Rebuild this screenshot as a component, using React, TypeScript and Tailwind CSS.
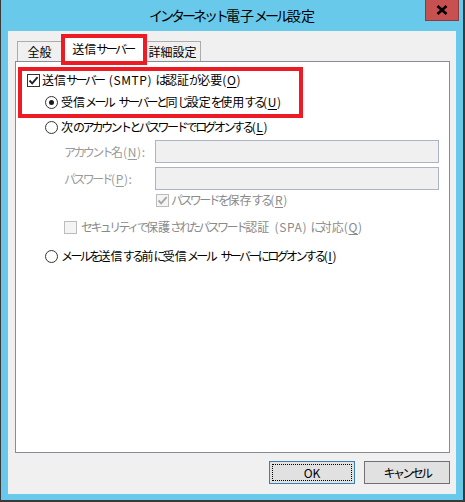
import React from 'react';

const font = { fontFamily: '"Noto Sans CJK JP", "Noto Sans", sans-serif' };

// Meiryo UI draws kana narrower and latin wider than Noto, so tighten/loosen by run
function T({ text, k, title }: { text: string; k?: string; title?: boolean }) {
  const parts = text.split(/([\u3040-\u30ff]+|[\x20-\x7e]+)/).filter(Boolean);
  return (
    <span>
      {parts.map((p, i) =>
        /^[\u3040-\u30ff]+$/.test(p) ? (
          <span key={i} className={title ? 'tracking-[-3px]' : 'tracking-[-2.6px]'}>{p}</span>
        ) : /^[\x20-\x7e]+$/.test(p) ? (
          <span key={i} className={p.startsWith(' ') ? 'tracking-[0.6px] ml-[2px]' : 'tracking-[0.6px]'}>{p}</span>
        ) : (
          <span key={i}>{p}</span>
        )
      )}
      {k && (
        <span className="tracking-[0.6px]">
          (<span className="underline underline-offset-2">{k}</span>)
        </span>
      )}
    </span>
  );
}

function CheckBox({ checked, disabled }: { checked?: boolean; disabled?: boolean }) {
  return (
    <span
      className={
        'w-[13px] h-[13px] shrink-0 border flex items-center justify-center ' +
        (disabled ? 'border-[#bcbcbc] bg-[#f4f4f4]' : 'border-[#333333] bg-white')
      }
    >
      {checked && (
        <svg width="11" height="11" viewBox="0 0 11 11">
          <path
            d="M1.5 5.5 L4.2 8.3 L9.6 2.2"
            fill="none"
            stroke={disabled ? '#a6a6a6' : '#222222'}
            strokeWidth="1.9"
          />
        </svg>
      )}
    </span>
  );
}

function Radio({ checked }: { checked?: boolean }) {
  return (
    <span className="w-[13px] h-[13px] shrink-0 rounded-full border border-[#333333] bg-white flex items-center justify-center">
      {checked && <span className="w-[5px] h-[5px] rounded-full bg-[#1a1a1a]" />}
    </span>
  );
}

export default function App() {
  return (
    <div className="w-[465px] h-[502px] bg-[#3a3a3a] pl-px pr-[2px] pb-[2px] text-[12px] text-black whitespace-nowrap" style={font}>
      <div className="relative h-full bg-[#69c9ea] flex flex-col px-[7px] pb-[6px]">
        {/* title bar */}
        <div className="h-[31px] flex items-center justify-center text-[14px] pb-[1px]">
          <T text="インターネット電子メール設定" title />
        </div>
        <div className="absolute top-0 right-[4px] w-[34px] h-[21px] bg-[#c75050] border-x border-b border-[#8c3a3a] flex items-center justify-center">
          <svg width="12" height="10" viewBox="0 0 12 10">
            <path d="M1.5 1 L10.5 9 M10.5 1 L1.5 9" stroke="#000" strokeWidth="2.6" />
          </svg>
        </div>

        {/* client area */}
        <div className="flex-1 bg-[#f0f0f0] flex flex-col">
          <div className="ml-[7px] mr-[6px] mt-[5px]">
            {/* tabs */}
            <div className="flex items-end h-[25px] pl-[2px]">
              <div className="w-[44px] h-[20px] border-t border-l border-[#acacac] bg-[#f0f0f0] flex items-center justify-center pt-[1px]">
                全般
              </div>
              <div className="relative z-10 w-[84px] h-[26px] -mb-px border-x border-t border-[#acacac] bg-white flex items-center justify-center pb-[1px]">
                <T text="送信サーバー" />
                <div className="absolute -top-[3px] -left-[1px] -right-[3px] -bottom-[3px] border-4 border-[#ed1c24]" />
              </div>
              <div className="w-[56px] h-[20px] border-t border-r border-[#acacac] bg-[#f0f0f0] flex items-center justify-center pt-[1px]">
                詳細設定
              </div>
            </div>

            {/* panel */}
            <div className="h-[392px] border border-[#898c95] bg-white flex flex-col">
              <div className="mt-[5px] ml-[2px] w-[285px] border-4 border-[#ed1c24] pb-[3px]">
                <div className="h-[18px] pl-[5px] flex items-center gap-[2px]">
                  <CheckBox checked />
                  <T text="送信サーバー (SMTP) は認証が必要" k="O" />
                </div>
                <div className="h-[18px] mt-[4px] pl-[23px] flex items-center gap-[3px]">
                  <Radio checked />
                  <T text="受信メール サーバーと同じ設定を使用する" k="U" />
                </div>
              </div>

              <div className="h-[18px] ml-[29px] flex items-center gap-[3px]">
                <Radio />
                <T text="次のアカウントとパスワードでログオンする" k="L" />
              </div>

              <div className="h-[23px] mt-[4px] ml-[48px] flex items-center text-[#9a9a9a]">
                <span className="w-[91px]">
                  <T text="アカウント名" k="N" />:
                </span>
                <div className="w-[284px] h-[23px] border border-[#abb4c4] bg-[#f0f0f0]" />
              </div>
              <div className="h-[23px] mt-[4px] ml-[48px] flex items-center text-[#9a9a9a]">
                <span className="w-[91px]">
                  <T text="パスワード" k="P" />:
                </span>
                <div className="w-[284px] h-[23px] border border-[#abb4c4] bg-[#f0f0f0]" />
              </div>

              <div className="h-[18px] mt-[1px] ml-[140px] flex items-center gap-[2px] text-[#8a8a8a]">
                <CheckBox checked disabled />
                <T text="パスワードを保存する" k="R" />
              </div>
              <div className="h-[18px] mt-[9px] ml-[48px] flex items-center gap-[4px] text-[#8a8a8a]">
                <CheckBox disabled />
                <T text="セキュリティで保護されたパスワード認証 (SPA) に対応" k="Q" />
              </div>

              <div className="h-[18px] mt-[11px] ml-[29px] flex items-center gap-[3px]">
                <Radio />
                <T text="メールを送信する前に受信メール サーバーにログオンする" k="I" />
              </div>
            </div>

            {/* buttons */}
            <div className="mt-[8px] flex justify-end gap-[9px]">
              <button className="w-[86px] h-[23px] border border-[#3c7fb1] bg-[#e1e1e1] p-[2px]">
                <span className="w-full h-full border border-dotted border-black flex items-center justify-center">
                  OK
                </span>
              </button>
              <button className="w-[86px] h-[23px] border border-[#707070] bg-[#e1e1e1] flex items-center justify-center">
                <T text="キャンセル" />
              </button>
            </div>
          </div>
        </div>
      </div>
    </div>
  );
}
